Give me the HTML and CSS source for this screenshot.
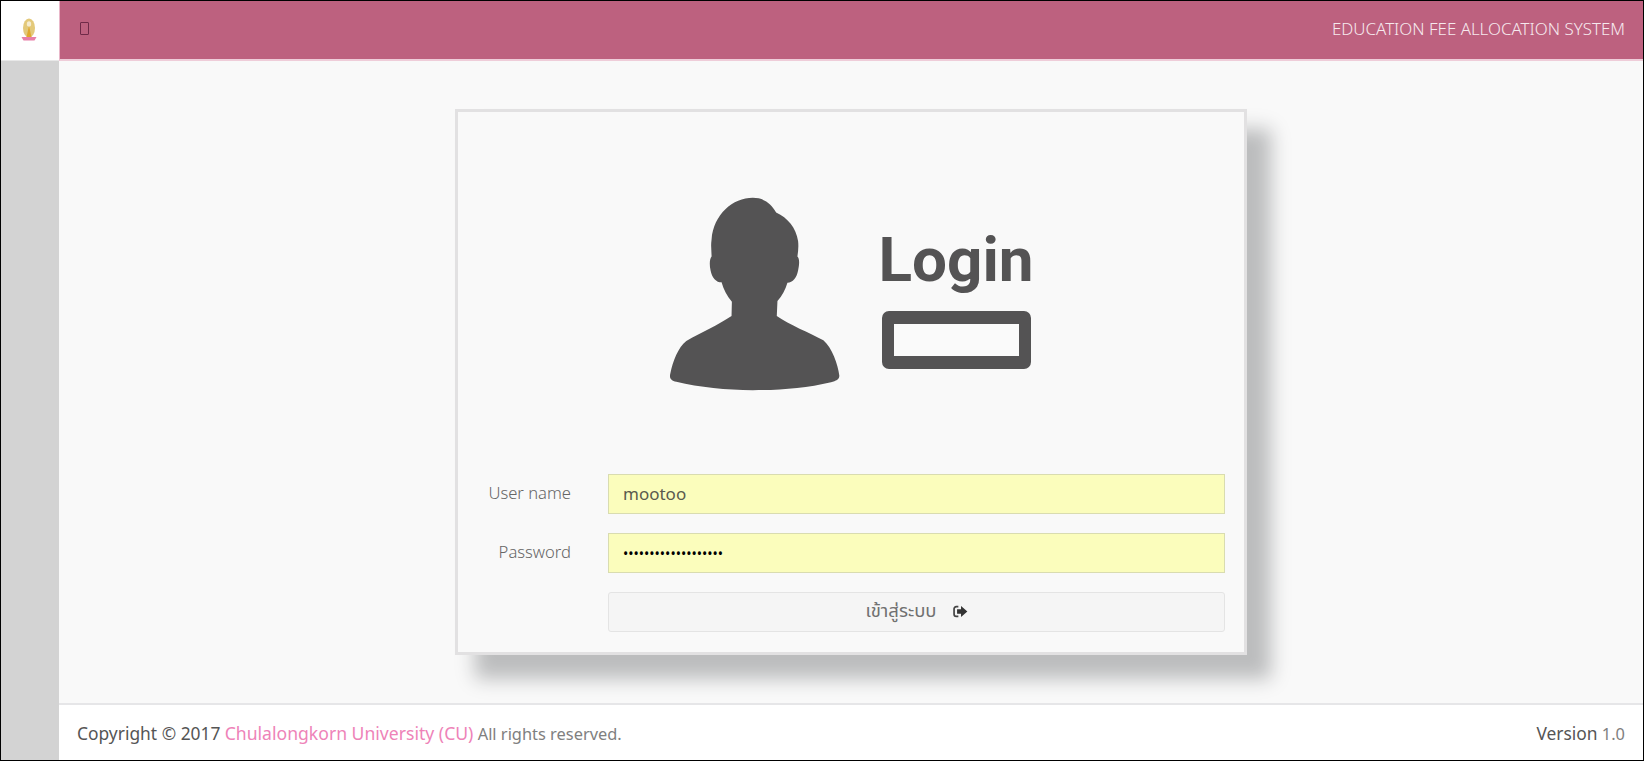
FILE: index.html
```html
<!DOCTYPE html>
<html lang="en">
<head>
<meta charset="utf-8">
<title>Education Fee Allocation System</title>
<link rel="stylesheet" href="styles.css">
</head>
<body>
<div class="frame">
  <header class="topbar">
    <div class="brand">
      <svg class="emblem" viewBox="0 0 16 24" width="16" height="24" aria-hidden="true">
        <ellipse cx="8" cy="10" rx="6" ry="9.5" fill="#e3c97a"/>
        <ellipse cx="8" cy="6" rx="2.2" ry="2.8" fill="#f5ecd0"/>
        <path d="M8 8 L10.5 19 H5.5 Z" fill="#e0a82e"/>
        <path d="M0.5 19 H15.5 L13.5 22.5 H2.5 Z" fill="#e87fa8"/>
      </svg>
    </div>
    <div class="bar">
      <span class="tofu"></span>
      <span class="system">EDUCATION FEE ALLOCATION SYSTEM</span>
    </div>
  </header>
  <div class="body-row">
    <aside class="sidebar"></aside>
    <div class="main">
      <main class="content">
        <section class="card">
          <div class="graphic">
            <svg class="person" viewBox="88 48 514 582" width="171" height="194" aria-hidden="true">
              <path fill="#545354" d="M340 50 C372 50 395 66 410 94 C445 110 470 140 476 180 C478 197 476 212 474 226 C481 232 480 250 476 268 C472 290 460 304 444 305 C438 325 428 345 414 360 L412 405 C450 432 510 455 552 478 C578 500 596 550 600 585 C600 596 590 601 575 604 C500 622 420 628 340 628 C260 628 180 620 110 603 C95 600 88 592 92 578 C100 540 115 500 140 480 C185 455 235 432 276 405 L277 362 C262 345 252 325 246 304 C230 304 217 290 213 268 C209 250 210 234 216 226 C216 210 213 195 216 175 C222 100 280 50 340 50 Z"/>
            </svg>
            <div class="wordmark">
              <span class="login-word">Login</span>
              <span class="login-box"></span>
            </div>
          </div>
          <form class="form">
            <label class="label" for="user">User name</label>
            <input class="field" id="user" type="text" value="mootoo">
            <label class="label" for="pass">Password</label>
            <input class="field field-pass" id="pass" type="password" value="mootoomootoomootoom">
            <button class="submit" type="button">
              <span>เข้าสู่ระบบ</span>
              <svg class="signin" viewBox="0 0 14 12" width="15" height="13" aria-hidden="true">
                <path d="M5 1.5 H3 A2 2 0 0 0 1 3.5 V8.5 A2 2 0 0 0 3 10.5 H5" fill="none" stroke="#444" stroke-width="1.6"/>
                <path d="M7.5 0.8 L13.4 6 L7.5 11.2 V8.2 H3.8 V3.8 H7.5 Z" fill="#333"/>
              </svg>
            </button>
          </form>
        </section>
      </main>
      <footer class="footer">
        <p class="copy"><span class="copy-strong">Copyright © 2017</span> <span class="copy-link">Chulalongkorn University (CU)</span> All rights reserved.</p>
        <p class="version"><span class="copy-strong">Version</span> 1.0</p>
      </footer>
    </div>
  </div>
</div>
</body>
</html>
```
FILE: styles.css
```css
* { box-sizing: border-box; }
html, body { margin: 0; height: 100%; }
body { font-family: "Noto Sans", "Open Sans", sans-serif; color: #777; background: #fff; }

.frame { height: 761px; border: 1px solid #000; display: flex; flex-direction: column; overflow: hidden; }

.topbar { display: flex; height: 60px; flex: none; }
.brand { width: 58px; flex: none; background: #fff; display: flex; align-items: center; justify-content: center; padding: 0 2px 2px 0; border-bottom: 1px solid #e8e8e8; }
.emblem { display: block; }
.bar { flex: 1; background: #bd617f; border-left: 1px solid #e9b7c9; border-bottom: 2px solid #efcdd9; display: flex; align-items: center; justify-content: space-between; padding: 0 18px 3px 20px; }
.tofu { width: 9px; height: 13px; border: 1.5px solid #6f2a48; border-radius: 1px; }
.system { color: #f6e9ee; font-size: 16.9px; font-weight: 300; line-height: 24px; }

.body-row { flex: 1; display: flex; min-height: 0; }
.sidebar { width: 58px; flex: none; background: #d3d3d3; }
.main { flex: 1; display: flex; flex-direction: column; min-width: 0; }

.content { flex: 1; background: #f9f9f9; display: flex; align-items: center; justify-content: center; }
.card { width: 792px; height: 546px; background: #f9f9f9; border: 3px solid #e2e1e2; box-shadow: 22px 22px 18px 2px #bcbdbe; padding: 85px 19px 0 0; display: flex; flex-direction: column; }

.graphic { display: flex; justify-content: center; align-items: flex-start; gap: 40px; padding-left: 17px; height: 277px; }
.person { display: block; flex: none; }
.wordmark { display: flex; flex-direction: column; width: 152px; padding-top: 26px; }
.login-word { font-family: Roboto, "Liberation Sans", sans-serif; font-weight: 700; font-size: 62px; line-height: 74px; color: #545354; white-space: nowrap; margin-left: -1px; }
.login-box { display: block; width: 149px; height: 58px; margin: 14px 0 0 2px; border-style: solid; border-color: #545354; border-width: 13px 12px; border-radius: 7px; background: #fafafa; }

.form { display: grid; grid-template-columns: 113px 617px; column-gap: 37px; row-gap: 19px; grid-auto-rows: 40px; align-items: center; }
.label { text-align: right; font-size: 16.6px; font-weight: 300; color: #666; padding-bottom: 3px; }
.field { height: 40px; width: 100%; background: #fbfdbc; border: 1px solid #d9dcb0; padding: 0 14px 2px; font: 17px "Noto Sans", sans-serif; color: #5a5a4e; outline: none; }
.field-pass { color: #000; font-size: 14px; padding-bottom: 0; }
.submit { grid-column: 2; height: 40px; background: #f5f5f5; border: 1px solid #e4e4e4; border-radius: 3px; display: flex; align-items: center; justify-content: center; gap: 16px; font: 18.5px "Noto Sans", "Noto Sans Thai", sans-serif; color: #707070; padding: 0 0 2px; }
.signin { display: block; }

.footer { height: 57px; flex: none; background: #fff; border-top: 2px solid #e6e6e8; display: flex; align-items: center; justify-content: space-between; padding: 0 18px; font-size: 16.4px; color: #808080; }
.copy, .version { margin: 0; }
.copy-strong { color: #555; font-size: 17.4px; }
.copy-link { color: #ee83b8; font-size: 17.6px; }
```
